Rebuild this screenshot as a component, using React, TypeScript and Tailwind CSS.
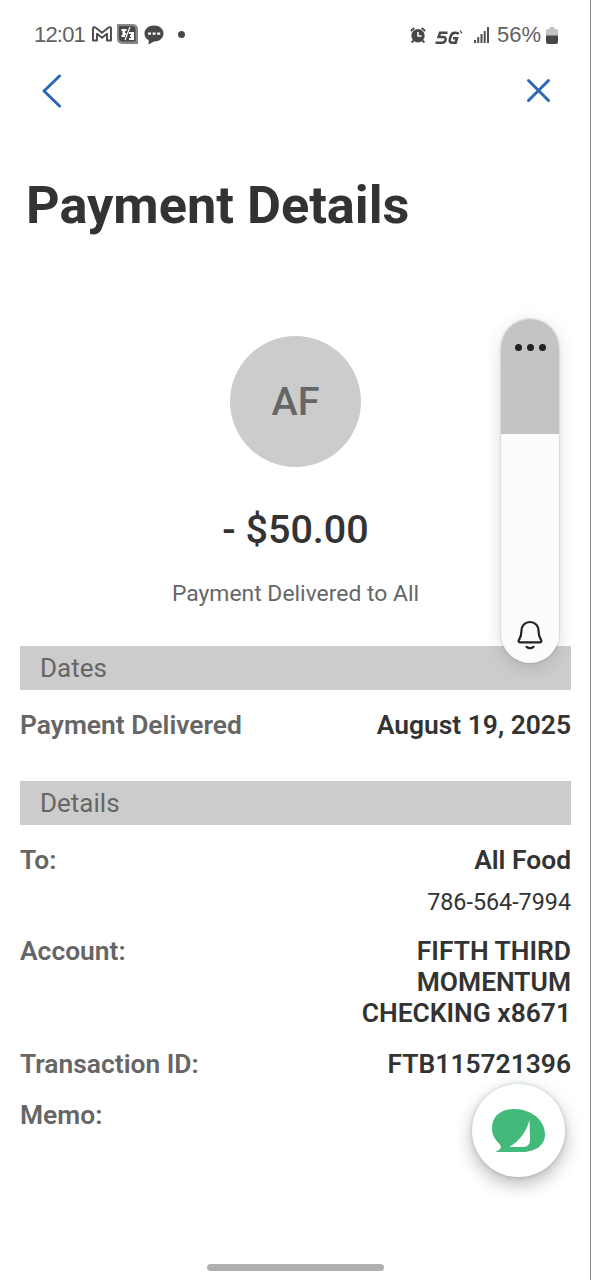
import type { ReactNode } from "react";

function StatusBar() {
  return (
    <div className="flex h-[68px] items-center justify-between pl-[34px] pr-[32px] font-['Liberation_Sans',sans-serif] text-[22px] text-[#626262]">
      <div className="flex items-center">
        <span className="w-[58px] pt-px tracking-[-0.8px]">12:01</span>
        <svg width="20" height="16" viewBox="0 0 20 16" fill="none" stroke="#505050" strokeWidth="2" strokeLinejoin="round">
          <path d="M1 14.500V2.500C1 1.200 2.400.8 3.400 1.500L10 6.700l6.600-5.200C17.600.8 19 1.200 19 2.500v12h-4V7.800l-5 4-5-4v6.700z" />
        </svg>
        <svg className="ml-[5px]" width="21" height="20" viewBox="0 0 21 20">
          <path d="M3 0h13a5 5 0 0 1 5 5v15H5a5 5 0 0 1-5-5V0z" fill="#888" />
          <path d="M2 2h12.500a4 4 0 0 1 4 4v11.500H6a4 4 0 0 1-4-4z" fill="#484848" />
          <path d="M4.500 5h5v2H8v2h1v2H8v2H4.500v-2h1V7h-1zM12 8h5v8h-5v-2h2v-1h-1v-2h1v-1h-2z" fill="#fff" />
          <path d="M13 3 8 16" stroke="#fff" strokeWidth="1.200" />
        </svg>
        <svg className="mt-[2px] ml-[6px]" width="20" height="20" viewBox="0 0 20 20">
          <path d="M10 .5c5.500 0 9.500 3.300 9.500 8s-4 8-9.500 8L4.500 19.500l.2-4.200C2 14 .5 11.500.5 8.500c0-4.700 4-8 9.500-8z" fill="#484848" />
          <path d="M4 7.500h3v2.300H4zM8.600 7.500h3v2.300h-3zM13.200 7.500h3v2.300h-3z" fill="#fff" />
        </svg>
        <span className="ml-[14px] size-[7px] rounded-full bg-[#484848]" />
      </div>
      <div className="flex items-center">
        <svg className="mt-[3px]" width="16" height="17" viewBox="0 0 16 17" fill="none" stroke="#484848">
          <path d="m.8 4 3.500-3M15.200 4l-3.500-3M3.600 13.500l-2 2M12.400 13.500l2 2" strokeWidth="1.800" />
          <circle cx="8" cy="8.700" r="6.700" fill="#484848" stroke="none" />
          <path d="M8 5v4h3.500" stroke="#fff" strokeWidth="1.500" />
        </svg>
        <svg className="mt-[6px] ml-[9px]" width="29" height="15" viewBox="0 0 29 15" fill="none" stroke="#484848" strokeWidth="2.500">
          <path d="M12.500 2.800H5L3.600 7h4.700c4 0 2.400 5.700-1.200 5.700H.5M23.500 4.200c-.4-1.100-1.200-1.400-3-1.400h-.5c-2.400 0-3.600 1.200-4.300 3.500l-.8 2.500c-.7 2.600.2 3.900 2.400 3.900h3.400l1.300-4.500h-4" />
          <path d="m25 .5 2 2.800" strokeWidth="1.200" />
        </svg>
        <svg className="mt-[2px] ml-[10px]" width="15" height="16" viewBox="0 0 15 16" fill="#505050">
          <path d="M0 13h2v3H0zM3.200 10h2v6h-2zM6.500 7h2v9h-2zM9.700 4h2v12h-2zM13 0h2v16h-2z" />
        </svg>
        <span className="ml-[8px] w-[46px] pt-px whitespace-nowrap">56%</span>
        <svg className="mt-[2px] ml-[3px]" width="12" height="17" viewBox="0 0 12 17">
          <path d="M3.500 0h5v2H10a2 2 0 0 1 2 2v5H0V4a2 2 0 0 1 2-2h1.500z" fill="#c4c4c4" />
          <path d="M0 8.500h12V15a2 2 0 0 1-2 2H2a2 2 0 0 1-2-2z" fill="#484848" />
        </svg>
      </div>
    </div>
  );
}

function SectionBar({ children }: { children: ReactNode }) {
  return (
    <h2 className="flex h-11 items-center bg-[#cccccc] px-5 text-[26px] text-[#666666]">{children}</h2>
  );
}

function Row({ label, children }: { label: string; children?: ReactNode }) {
  return (
    <div className="flex justify-between text-[26.4px] leading-[31px] font-semibold">
      <dt className="text-[#666666]">{label}</dt>
      <dd className="text-right text-[#333333]">{children}</dd>
    </div>
  );
}

function SidePill() {
  return (
    <div className="absolute top-[319px] left-[501px] flex h-[344px] w-[58px] flex-col items-center overflow-hidden rounded-full bg-[#fcfcfc]">
      <div className="flex h-[115px] w-full justify-center gap-[5px] bg-[#c4c4c4] pt-[25px]">
        <span className="size-[7px] rounded-full bg-[#222]" />
        <span className="size-[7px] rounded-full bg-[#222]" />
        <span className="size-[7px] rounded-full bg-[#222]" />
      </div>
      <svg className="mt-[186px]" width="26" height="30" viewBox="0 0 26 30" fill="none" stroke="#222" strokeWidth="2.200" strokeLinecap="round" strokeLinejoin="round">
        <path d="M13 2c-5 0-8.500 3.600-8.500 8.500 0 5.500-1.100 7-2.600 9.500-.7 1.300-.2 2.400 1 2.400h20.200c1.200 0 1.700-1.100 1-2.400-1.500-2.500-2.600-4-2.600-9.500C21.500 5.600 18 2 13 2z" />
        <path d="M9.500 26.800c2 1.500 5 1.500 7 0" />
      </svg>
    </div>
  );
}

function ChatButton() {
  return (
    <button className="absolute top-[1084px] left-[472px] flex size-[93px] items-center justify-center rounded-full bg-white shadow-[0_7px_18px_rgba(0,0,0,0.28),0_0_4px_rgba(70,150,110,0.3)]">
      <svg width="53" height="44" viewBox="0 0 53 44">
        <path d="M2.500 43C7 41.500 11 39 7.500 35 2 29.500 0 25 0 19 0 7 9 0 22 0c17 0 31 11 31 25.500C53 36.500 43 43 30 43z" fill="#43b97a" />
        <path d="M37.500 11c-3 11-9 20-20 27h13.500c5 0 7-3 7-7.500z" fill="#fff" />
      </svg>
    </button>
  );
}

export default function App() {
  return (
    <div className="relative h-[1280px] w-[591px] overflow-hidden border-r border-[#8c8c8c] bg-white font-[Roboto,sans-serif] text-[#333333]">
      <StatusBar />
      <header className="flex h-[45px] items-center justify-between pr-[39px] pl-[42px]">
        <svg width="20" height="34" viewBox="0 0 20 34" fill="none" stroke="#2c68b5" strokeWidth="3" strokeLinecap="round" strokeLinejoin="round">
          <path d="M17.500 2 2 17l15.500 15" />
        </svg>
        <svg width="25" height="25" viewBox="0 0 25 25" fill="none" stroke="#2c68b5" strokeWidth="3" strokeLinecap="round">
          <path d="m2.500 2.500 20 20M22.500 2.500l-20 20" />
        </svg>
      </header>

      <h1 className="mt-[62px] pl-[26px] text-[52.3px] leading-[60px] font-bold">Payment Details</h1>

      <section className="mt-[101px] flex flex-col items-center pl-px">
        <div className="flex size-[131px] items-center justify-center rounded-full bg-[#cccccc] pt-px text-[39.5px] font-medium text-[#666666]">
          AF
        </div>
        <p className="mt-[38px] text-[39.5px] leading-[50px] font-medium">- $50.00</p>
        <p className="mt-[25px] text-[22.9px] leading-[28px] text-[#666666]">Payment Delivered to All</p>
      </section>

      <div className="mt-[38px] pr-[19px] pl-5">
        <SectionBar>Dates</SectionBar>
        <dl className="mt-5">
          <Row label="Payment Delivered">August 19, 2025</Row>
        </dl>
        <div className="mt-10">
          <SectionBar>Details</SectionBar>
        </div>
        <dl className="mt-5 flex flex-col gap-5">
          <div>
            <Row label="To:">All Food</Row>
            <p className="mt-[13px] text-right text-[23.3px] leading-[27px]">786-564-7994</p>
          </div>
          <Row label="Account:">
            FIFTH THIRD
            <br />
            MOMENTUM
            <br />
            CHECKING x8671
          </Row>
          <Row label="Transaction ID:">FTB115721396</Row>
          <Row label="Memo:" />
        </dl>
      </div>

      <div className="absolute top-[319px] left-[501px] h-[344px] w-[58px] rounded-full shadow-[0_4px_18px_rgba(0,0,0,0.14),0_0_2px_rgba(0,0,0,0.3)]" />
      <SidePill />
      <ChatButton />
      <div className="absolute bottom-[9px] left-[207px] h-[7px] w-[177px] rounded-full bg-[#b0b0b0]" />
    </div>
  );
}
